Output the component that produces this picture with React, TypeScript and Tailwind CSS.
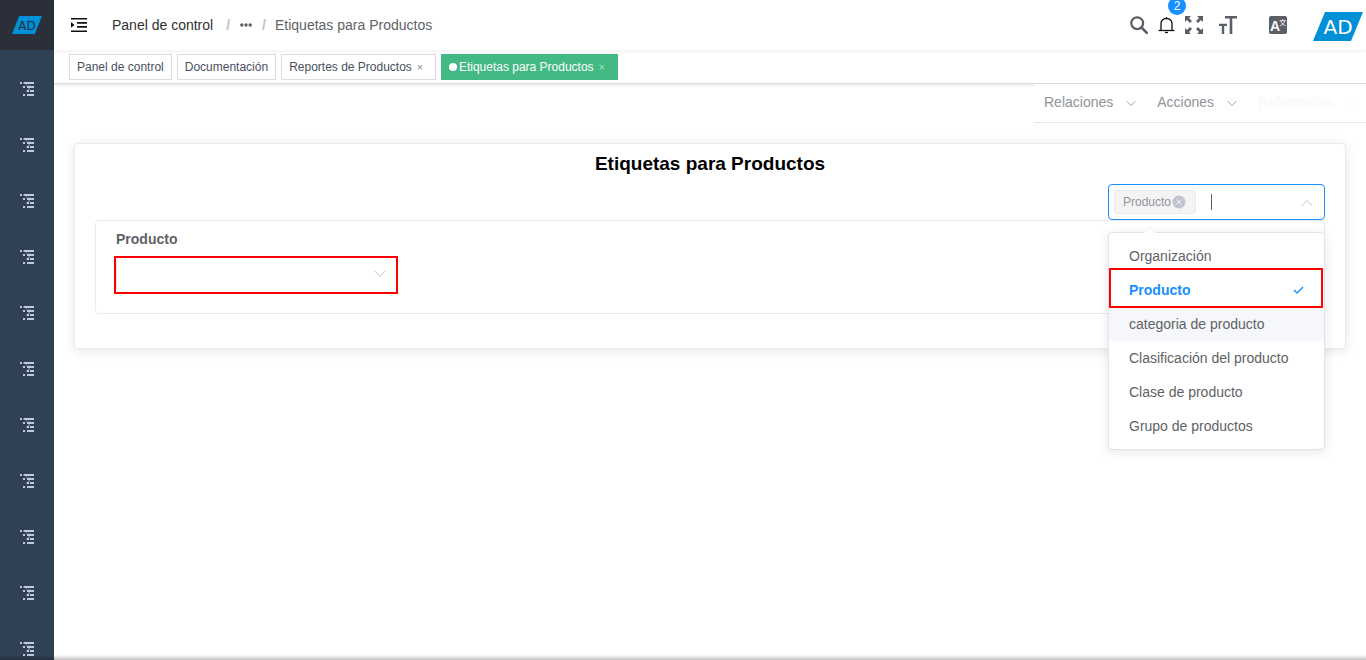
import React from "react";

const sidebarItems = ["Sistema", "Seguridad", "Socios", "Materiales", "Ventas", "Compras", "Inventario", "Producción", "Contabilidad", "Proyectos", "Recursos"];

const options = [
  "Organización",
  "Producto",
  "categoria de producto",
  "Clasificación del producto",
  "Clase de producto",
  "Grupo de productos",
];

function Chevron({ up = false, className = "h-2 w-3" }: { up?: boolean; className?: string }) {
  return (
    <svg viewBox="0 0 12 8" fill="none" stroke="currentColor" aria-hidden="true" className={`shrink-0 ${className}`}>
      <path d={up ? "M1 6.8 6 1.6l5 5.2" : "M1 1.2 6 6.4l5-5.2"} />
    </svg>
  );
}

function TreeIcon() {
  return (
    <svg viewBox="0 0 14 14" className="h-[14px] w-[14px]" fill="#bfcbd9" aria-hidden="true" shapeRendering="crispEdges">
      <path d="M0 0h2v2H0zM4 0h10v2H4zM3 4h2v2H3zM7 4h7v2H7zM7 8h2v2H7zM10 8h4v2h-4zM3 12h2v2H3zM7 12h7v2H7z" />
      <path d="M3 0h1v2H3zM6 2h1v2H6zM8 3h2v1H8zM8 6h2v2H8zM6 8h1v2H6z" opacity=".4" />
    </svg>
  );
}

function Logo({ className, dark = false }: { className: string; dark?: boolean }) {
  return (
    <svg viewBox="0 0 50 29" preserveAspectRatio="none" className={`overflow-visible ${className}`} role="img" aria-label="AD">
      <path d="M12 0H50L38 29H0z" fill="#0090d8" />
      <text
        x="25"
        y="22"
        textAnchor="middle"
        fontSize="20"
        className="font-['DejaVu_Sans',sans-serif]"
        fill={dark ? "#2b2f3a" : "#fff"}
      >
        AD
      </text>
    </svg>
  );
}

function SearchIcon() {
  return (
    <svg viewBox="0 0 18 18" className="h-[18px] w-[18px]" fill="none" stroke="#5a5e66" aria-hidden="true">
      <circle cx="7.200" cy="7.200" r="5.900" strokeWidth="2.200" />
      <path d="m11.500 11.500 5.300 5.300" strokeWidth="2.600" strokeLinecap="round" />
    </svg>
  );
}

function BellIcon() {
  return (
    <svg viewBox="0 0 17 18" className="h-[18px] w-[17px]" fill="none" stroke="#111" strokeWidth="1.300" aria-hidden="true">
      <path d="M8.500 1v1.500M3 14V7.500a5 5 0 0 1 5-5h1a5 5 0 0 1 5 5V14" />
      <path d="M.5 14.500h16" />
      <path d="M7 16.500h3" />
    </svg>
  );
}

function ExpandIcon() {
  return (
    <svg viewBox="0 0 18 18" className="h-[18px] w-[18px]" fill="#5a5e66" aria-hidden="true">
      <path d="M0 0h6L4 2l3 3-2 2-3-3-2 2zM18 0v6l-2-2-3 3-2-2 3-3-2-2zM0 18v-6l2 2 3-3 2 2-3 3 2 2zM18 18h-6l2-2-3-3 2-2 3 3 2-2z" />
    </svg>
  );
}

function SizeIcon() {
  return (
    <svg viewBox="0 0 18 18" className="h-[18px] w-[18px]" fill="#5a5e66" aria-hidden="true">
      <path d="M6 0h12v2.400h-4.700V18h-2.600V2.400H6zM0 7.700h8v2.200H5.200V18H2.800V9.900H0z" />
    </svg>
  );
}

function LanguageIcon() {
  return (
    <svg viewBox="0 0 18 18" className="h-[18px] w-[18px]" aria-hidden="true">
      <rect width="18" height="18" rx="2" fill="#5a5e66" />
      <text x="1" y="15" fontSize="14" fontWeight="700" fill="#fff">A</text>
      <path d="M10.500 4.700h6.500M13.700 3.200v1.500M15.700 4.900c-.6 2.400-2.200 4-4.800 4.800M11.800 4.900c.6 2.300 2.200 4 4.900 4.800" fill="none" stroke="#fff" strokeWidth=".8" />
    </svg>
  );
}

function Sidebar() {
  return (
    <aside className="flex w-[54px] shrink-0 flex-col overflow-hidden bg-[#304156]">
      <a href="#inicio" className="flex h-[50px] shrink-0 items-center justify-center bg-[#2b2f3a]">
        <Logo dark className="h-[18px] w-[30px]" />
      </a>
      <nav aria-label="Menú" className="pt-[11px]">
        {sidebarItems.map((item) => (
          <a key={item} href={`#${item}`} aria-label={item} className="flex h-14 items-center justify-center">
            <TreeIcon />
          </a>
        ))}
      </nav>
    </aside>
  );
}

function Navbar() {
  return (
    <header className="relative flex h-[50px] shrink-0 items-center bg-white pl-[17px] pr-[3px] shadow-[0_1px_4px_rgba(0,21,41,0.08)]">
      <button aria-label="Contraer menú">
        <svg viewBox="0 0 16 14" className="h-[14px] w-4" fill="#111" aria-hidden="true">
          <path d="M0 0h16v1.500H0zM6 4h10v1.700H6zM6 8h10v1.700H6zM0 12.400h16V14H0zM0 4l3.500 2.900L0 9.800z" />
        </svg>
      </button>
      <nav aria-label="Ruta" className="ml-[25px] flex items-center text-[14px] leading-[50px]">
        <a href="#panel" className="text-[#303133]">Panel de control</a>
        <span className="ml-[13px] mr-[10px] font-bold text-[#c0c4cc]">/</span>
        <button aria-label="Más niveles">
          <svg viewBox="0 0 12 4" className="h-1 w-3" fill="#5a5e66" aria-hidden="true">
            <circle cx="1.800" cy="2" r="1.700" />
            <circle cx="6" cy="2" r="1.700" />
            <circle cx="10.200" cy="2" r="1.700" />
          </svg>
        </button>
        <span className="ml-[10px] mr-[9px] font-bold text-[#c0c4cc]">/</span>
        <span className="text-[#606266]">Etiquetas para Productos</span>
      </nav>
      <div className="ml-auto flex items-center">
        <button aria-label="Buscar"><SearchIcon /></button>
        <button aria-label="Notificaciones" className="relative ml-2.5">
          <BellIcon />
          <span className="absolute -top-[19px] left-[10px] flex h-[18px] min-w-[18px] items-center justify-center rounded-full bg-[#1890ff] text-[12px] leading-none text-white">2</span>
        </button>
        <button aria-label="Pantalla completa" className="ml-2.5"><ExpandIcon /></button>
        <button aria-label="Tamaño de texto" className="ml-4"><SizeIcon /></button>
        <button aria-label="Idioma" className="ml-8"><LanguageIcon /></button>
        <button aria-label="Perfil" className="ml-[26px] pt-[3px]"><Logo className="h-[29px] w-[50px]" /></button>
      </div>
    </header>
  );
}

function Tags() {
  const tag = "flex h-[26px] items-center border border-[#d8dce5] bg-white px-[7px] pt-px text-[12px] text-[#495060]";
  return (
    <div className="flex h-[34px] shrink-0 items-center gap-[5px] border-b border-[#d8dce5] bg-white pl-[15px] shadow-[0_1px_3px_rgba(0,0,0,0.12)]">
      <a href="#panel" className={tag}>Panel de control</a>
      <a href="#documentacion" className={tag}>Documentación</a>
      <div className={tag}>
        <a href="#reportes">Reportes de Productos</a>
        <button aria-label="Cerrar Reportes de Productos" className="w-4 text-center text-[10px] text-[#80858f]">×</button>
      </div>
      <div className="flex h-[26px] items-center bg-[#42b983] px-2 pt-px text-[12px] text-white">
        <span className="mr-0.5 h-2 w-2 rounded-full bg-white" />
        <a href="#etiquetas">Etiquetas para Productos</a>
        <button aria-label="Cerrar Etiquetas para Productos" className="w-4 text-center text-[10px] text-[#b4e3cd]">×</button>
      </div>
    </div>
  );
}

function ContextMenu() {
  const item = "flex items-center gap-[13px]";
  return (
    <div className="relative ml-auto flex h-[39px] w-[332px] items-center gap-[21px] border-b border-[#e6e6e6] bg-white pb-0.5 pl-[10px] text-[14px] text-[#909399]">
      <button className={item}>Relaciones<Chevron className="mt-0.5 h-[7px] w-[10px]" /></button>
      <button className={item}>Acciones<Chevron className="mt-0.5 h-[7px] w-[10px]" /></button>
      <button className={`${item} text-[#f7f7f8]`}>Referencias<Chevron className="mt-0.5 h-[7px] w-[10px]" /></button>
    </div>
  );
}

function FieldPicker() {
  return (
    <div className="relative ml-auto w-[217px]">
      <div className="flex h-9 items-center rounded border border-[#1890ff] bg-white pl-[5px] pr-[11px]">
        <span className="flex h-6 w-[82px] shrink-0 items-center rounded border border-[#e9e9eb] bg-[#f4f4f5] pl-2 text-[12px] text-[#909399]">
          Producto
          <button aria-label="Quitar Producto" className="ml-px">
            <svg viewBox="0 0 14 14" className="h-[14px] w-[14px]" aria-hidden="true">
              <circle cx="7" cy="7" r="6.500" fill="#c0c4cc" />
              <path d="m4.500 4.500 5 5m0-5-5 5" stroke="#f4f4f5" />
            </svg>
          </button>
        </span>
        <span className="ml-[15px] h-4 w-px shrink-0 bg-[#606266]" />
        <input aria-label="Buscar campo" className="min-w-0 flex-1 bg-transparent text-[14px] outline-none" />
        <Chevron up className="mt-0.5 h-2 w-3 text-[#c0c4cc]" />
      </div>
      <div className="absolute inset-x-0 top-12 z-10 rounded border border-[#dfe4ed] bg-white py-1.5 shadow-[0_2px_12px_rgba(0,0,0,0.1)]">
        <svg viewBox="0 0 12 7" className="absolute -top-[6px] left-[35px] h-[7px] w-3" aria-hidden="true">
          <path d="M0 6 6 0l6 6v1H0z" fill="#fff" />
          <path d="M0 6 6 .5 12 6" fill="none" stroke="#e6ebf5" strokeWidth=".8" />
        </svg>
        <ul role="listbox" aria-label="Campos" className="text-[14px] text-[#606266]">
          {options.map((option) => {
            const selected = option === "Producto";
            const hovered = option === "categoria de producto";
            return (
              <li
                key={option}
                role="option"
                aria-selected={selected}
                className={`relative flex h-[34px] cursor-pointer items-center justify-between px-5 ${selected ? "z-10 font-bold text-[#1890ff]" : ""} ${hovered ? "bg-[#f5f7fa]" : ""}`}
              >
                {option}
                {selected && (
                  <>
                    <svg viewBox="0 0 12 10" className="h-[9px] w-[11px]" fill="none" stroke="currentColor" strokeWidth="1.600" aria-hidden="true">
                      <path d="m1 4.500 3.400 3.300L11 1" />
                    </svg>
                    <span className="pointer-events-none absolute -bottom-[1px] -top-[5px] left-0 right-[1px] border-2 border-[#ff0000]" />
                  </>
                )}
              </li>
            );
          })}
        </ul>
      </div>
    </div>
  );
}

function LabelsCard() {
  return (
    <section className="mx-5 mt-5 rounded border border-[#e6ebf5] bg-white px-5 pb-[34px] shadow-[0_2px_12px_rgba(0,0,0,0.1)]">
      <h1 className="h-10 text-center text-[19px] font-bold leading-10 text-black">Etiquetas para Productos</h1>
      <FieldPicker />
      <form className="rounded border border-[#e6ebf5] px-[18px] pb-[19px]">
        <label htmlFor="producto" className="block h-[35px] pl-0.5 text-[14px] font-bold leading-9 text-[#606266]">Producto</label>
        <div className="relative w-[284px] border-2 border-[#ff0000]">
          <select id="producto" className="block h-[34px] w-full appearance-none rounded border-l border-[#dfe4ed] bg-white px-3 text-[14px] text-[#606266] outline-none">
            <option value="" />
          </select>
          <Chevron className="pointer-events-none absolute right-2.5 top-3 h-2 w-3 text-[#c0c4cc]" />
        </div>
      </form>
    </section>
  );
}

export default function App() {
  return (
    <div className="relative flex h-screen overflow-hidden bg-white font-['Liberation_Sans',Arial,sans-serif]">
      <Sidebar />
      <div className="flex min-w-0 flex-1 flex-col">
        <Navbar />
        <Tags />
        <main className="flex-1">
          <ContextMenu />
          <LabelsCard />
        </main>
      </div>
      <div className="pointer-events-none absolute inset-x-0 bottom-0 h-[5px] bg-linear-to-b from-transparent to-black/25" />
    </div>
  );
}
